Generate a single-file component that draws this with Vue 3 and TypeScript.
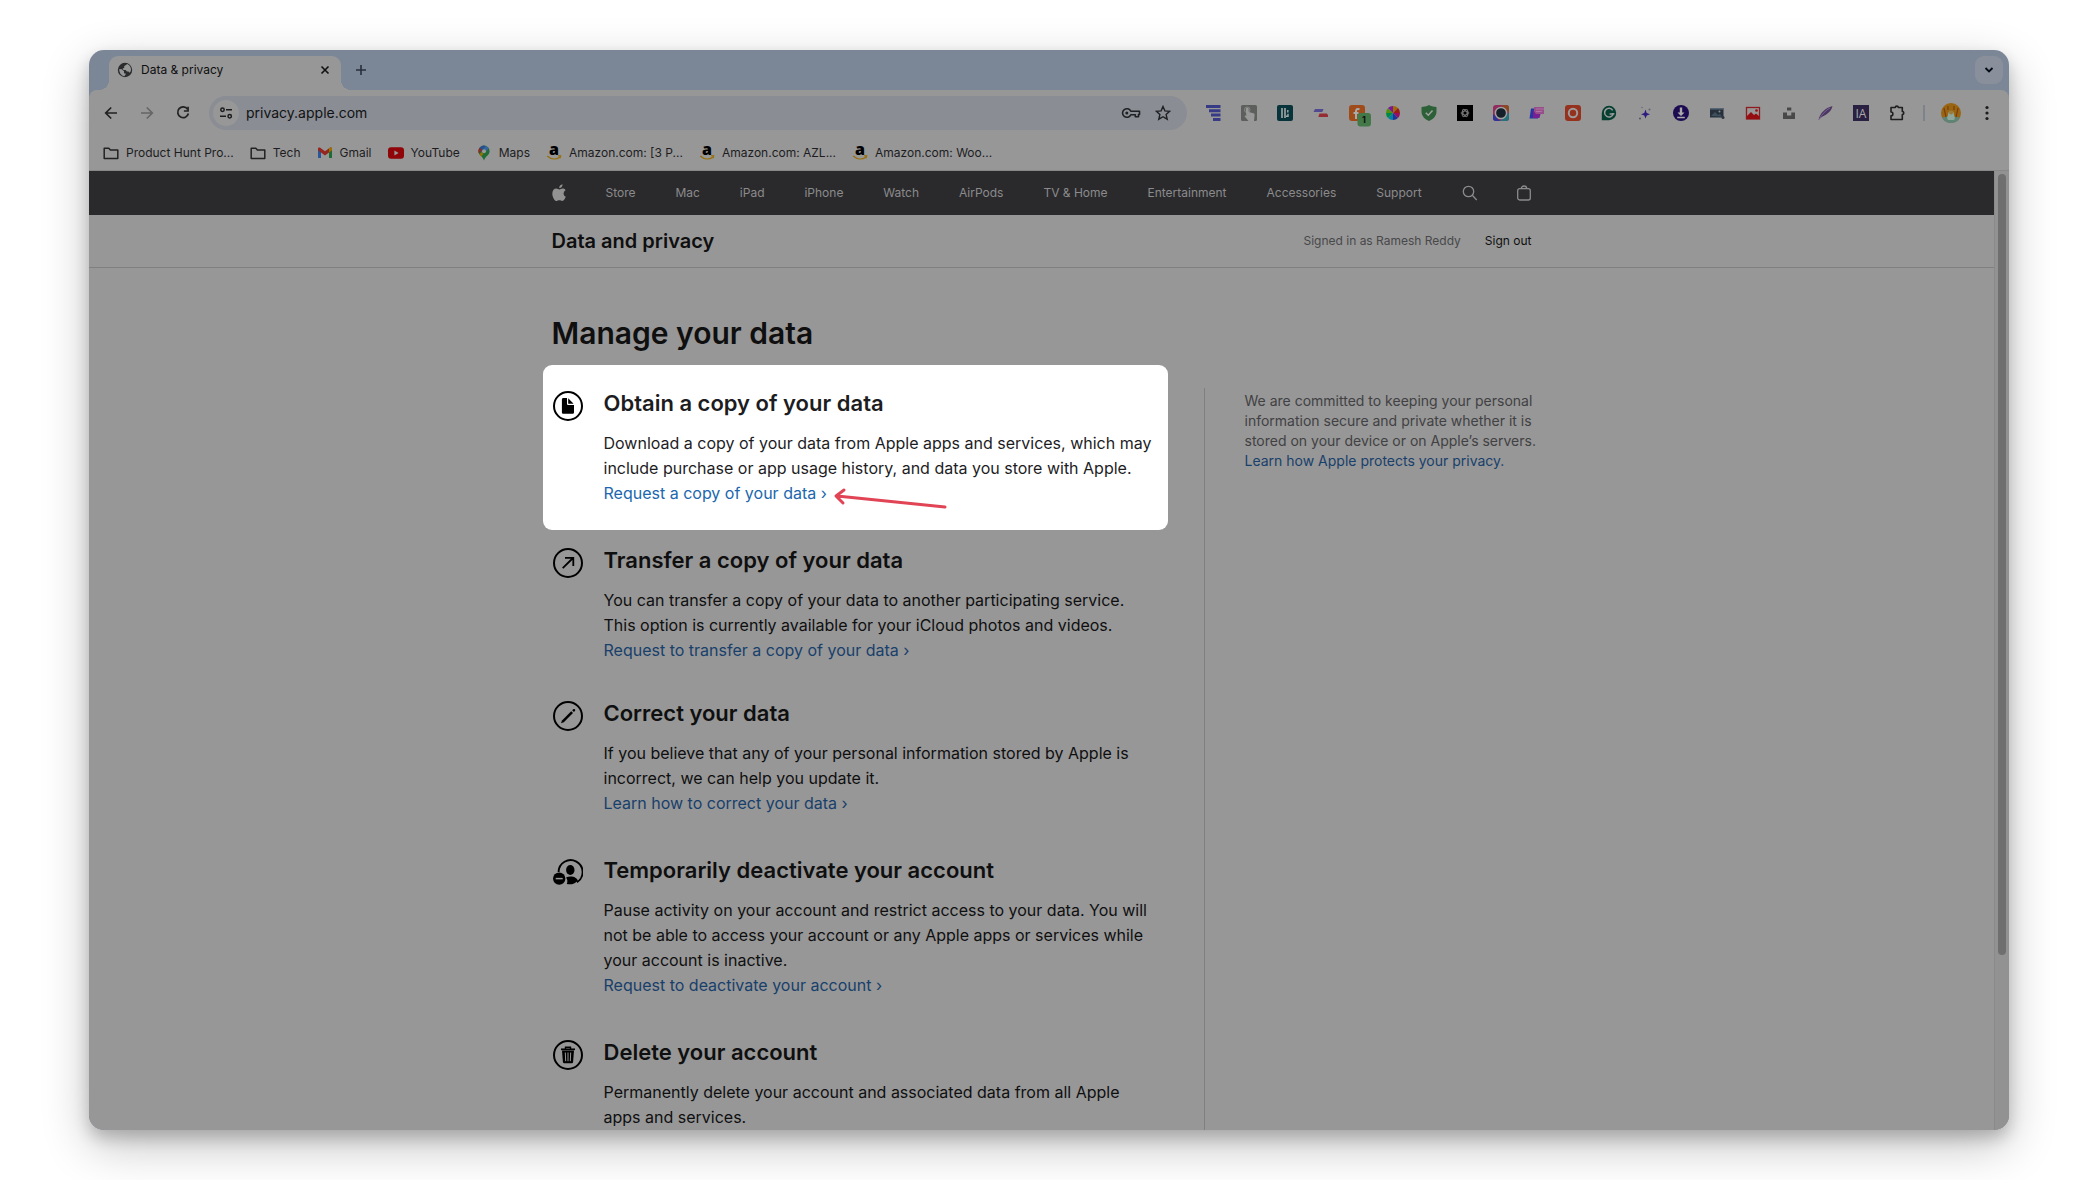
<script setup lang="ts">
interface Glyph {
  name: string
  art: string
}
interface Bookmark extends Glyph {
  label: string
}
interface Task {
  title: string
  lines: string[]
  link?: string
  icon: string
  kind?: string
}

const folder =
  '<path d="M1.2 3.2h4.600l1.600 1.800h7.400v8.600H1.200z" fill="none" stroke="#222" stroke-width="1.500" stroke-linejoin="round"/>'
const amazon =
  '<text x="8" y="10" text-anchor="middle" font-family="Open Sans, sans-serif" font-weight="800" font-size="16" fill="#000">a</text><path d="M1.200 11c4 3.600 9 3.700 12.600 1.200M12.200 10.800l2.400.1-.7 2.400" fill="none" stroke="#96700f" stroke-width="1.400"/>'

const bookmarks: Bookmark[] = [
  { name: 'folder', label: 'Product Hunt Pro...', art: folder },
  { name: 'folder', label: 'Tech', art: folder },
  {
    name: 'gmail',
    label: 'Gmail',
    art: '<path d="M1 3.500h3V13H1z" fill="#2a5596"/><path d="M12 3.500h3V13h-3z" fill="#1d6b35"/><path d="M1 4.500V3.600C1 2.500 2.300 2 3.200 2.700L8 6.300l4.800-3.600c.9-.7 2.200-.2 2.200.9v1.600L8 10.400 1 5.200z" fill="#95261f"/><path d="M12 3.300l.8-.6c.9-.7 2.200-.2 2.200.9v1.600l-3 2.200z" fill="#967200"/>',
  },
  {
    name: 'youtube',
    label: 'YouTube',
    art: '<rect x="0" y="2.200" width="16" height="11.600" rx="3" fill="#8f0509"/><path d="M6.400 5.600v4.800L10.600 8z" fill="#999"/>',
  },
  {
    name: 'maps',
    label: 'Maps',
    art: '<path d="M8 .6a5.600 5.600 0 0 0-5.600 5.600c0 4 4.300 4.700 5.600 9.200 1.300-4.500 5.600-5.200 5.600-9.200A5.600 5.600 0 0 0 8 .6z" fill="#1f6c35"/><path d="M3.600 2.700A5.600 5.600 0 0 1 9.800.9L5.200 7z" fill="#274f92"/><path d="M3.600 2.700A5.600 5.600 0 0 0 3 8.600L6 5z" fill="#8e2a20"/><path d="M3.500 9.500L5.500 7l2 1.700-2.300 2.900z" fill="#967200"/><path d="M9.800.9a5.600 5.600 0 0 1 3 2.400L10 6.500 7.500 4z" fill="#3566a0"/><circle cx="8" cy="6.200" r="2" fill="#999"/>',
  },
  { name: 'amazon', label: 'Amazon.com: [3 P...', art: amazon },
  { name: 'amazon', label: 'Amazon.com: AZL...', art: amazon },
  { name: 'amazon', label: 'Amazon.com: Woo...', art: amazon },
]

const extensions: Glyph[] = [
  {
    name: 'Funnel',
    art: '<path d="M1 0h14.500v3H1zM4 4.300h11.500v3H4zM6 8.600h9.500v3H6zM8 12.900h7.500V16H8z" fill="#373b86"/>',
  },
  {
    name: 'Touch',
    art: '<rect width="16" height="16" rx="1.500" fill="#5d5f5d"/><circle cx="6.200" cy="4.800" r="2.800" fill="none" stroke="#858585"/><path d="M6.200 2.800c1 0 1.500.6 1.500 1.500V7l4.700 1.200c1 .3 1.400 1 1.200 2L13 16H7.500L3.500 11.200c.5-.9 1.200-.8 1.800-.3L4.800 4.300c0-.9.4-1.500 1.400-1.500z" fill="#989898"/>',
  },
  {
    name: 'Notes',
    art: '<rect width="16" height="16" rx="2" fill="#06343a"/><path d="M5 3v10M8 3v10" stroke="#a3a8a8" stroke-width="1.600"/><path d="M10.800 5v2.500M11 8.700v2.600H9" fill="none" stroke="#a3a8a8" stroke-width="1.400"/>',
  },
  {
    name: 'Flow',
    art: '<path d="M2 4h8.500L9.300 7H.5z" fill="#524a91"/><path d="M6.500 8.500h7.300l1.200 1.500v2H5.300z" fill="#932c33"/>',
  },
  {
    name: 'Feed',
    art: '<rect width="16" height="16" rx="3" fill="#a04c1a"/><path d="M10.500 4.300c-2-.9-3.500 0-3.500 2V14M4.500 8h5" stroke="#aaa" stroke-width="2" fill="none"/><rect x="8.500" y="8" width="13.500" height="13.500" rx="3" fill="#437848"/><text x="15" y="18.200" text-anchor="middle" font-family="Inter, sans-serif" font-size="9" font-weight="700" fill="#111">1</text>',
  },
  {
    name: 'Colors',
    art: '<path d="M8 8V1a7 7 0 0 1 5 2z" fill="#a06b00"/><path d="M8 8l5-5a7 7 0 0 1 2 5z" fill="#9b1c10"/><path d="M8 8h7a7 7 0 0 1-2 5z" fill="#960e61"/><path d="M8 8l5 5a7 7 0 0 1-5 2z" fill="#25319a"/><path d="M8 8v7a7 7 0 0 1-5-2z" fill="#007f9e"/><path d="M8 8l-5 5a7 7 0 0 1-2-5z" fill="#008945"/><path d="M8 8H1a7 7 0 0 1 2-5z" fill="#50920b"/><path d="M8 8L3 3a7 7 0 0 1 5-2z" fill="#7d169a"/>',
  },
  {
    name: 'Shield',
    art: '<path d="M8 0c2.800 1.500 5 1.900 7.500 2v4.500c0 4.500-3.500 8-7.500 9.500C4 14.500.5 11 .5 6.500V2C3 1.900 5.200 1.500 8 0z" fill="#2c6037"/><path d="M4.800 7.700l2.500 2.500 4.200-4.700" stroke="#a0a0a0" stroke-width="1.500" fill="none"/>',
  },
  {
    name: 'Knot',
    art: '<rect width="16" height="16"/><g fill="none" stroke="#777" stroke-width=".9"><ellipse cx="8" cy="8" rx="4" ry="2"/><ellipse cx="8" cy="8" rx="4" ry="2" transform="rotate(60 8 8)"/><ellipse cx="8" cy="8" rx="4" ry="2" transform="rotate(120 8 8)"/></g>',
  },
  {
    name: 'Camera',
    art: '<rect width="16" height="16" rx="3" fill="#912c5d"/><path d="M16 7v6a3 3 0 0 1-3 3H7z" fill="#25727c"/><path d="M13 0a3 3 0 0 1 3 3v5L8 0z" fill="#8c4825"/><path d="M0 9l7 7H3a3 3 0 0 1-3-3z" fill="#2d3498"/><circle cx="8" cy="8" r="5.600" fill="#14212a" stroke="#9f9f9f" stroke-width="1.500"/>',
  },
  {
    name: 'Layers',
    art: '<path d="M2 3.500h7v10H.5z" fill="#2635a1"/><path d="M5 2h10v7H7l-2 3z" fill="#964f88"/><path d="M7 4h8M7 6.500h6" stroke="#b071a0"/><path d="M4 5v8h6.500l1-4H7z" fill="#771f92"/>',
  },
  {
    name: 'Ring',
    art: '<rect width="16" height="16" rx="3" fill="#96311d"/><circle cx="8" cy="8" r="4.200" fill="none" stroke="#9c9c9c" stroke-width="2"/>',
  },
  {
    name: 'Grammar',
    art: '<path d="M8 .8A7.200 7.200 0 1 1 8 15.200H.8V8A7.200 7.200 0 0 1 8 .8z" fill="#053f31"/><path d="M11.700 5.300A4.400 4.400 0 1 0 12.200 9H8.600M10.800 8.800h2.600" fill="none" stroke="#999" stroke-width="1.500"/>',
  },
  {
    name: 'Sparkle',
    art: '<path d="M8.500 4.500L9.700 8l3.300 1.200-3.300 1.200-1.200 3.100-1.200-3.100L4 9.200 7.300 8z" fill="#2f1a80"/><circle cx="12.500" cy="4.500" r="1" fill="#666070"/><circle cx="5" cy="2.500" r=".7" fill="#666070"/><circle cx="3" cy="13.500" r="1" fill="#555060"/>',
  },
  {
    name: 'Download',
    art: '<circle cx="8" cy="8" r="8" fill="#1c0b51"/><path d="M6.800 2.600h2.400v5H11.500L8 11 4.500 7.600h2.300z" fill="#aaa"/><path d="M4.200 12.500h7.600" stroke="#aaa" stroke-width="1.400"/>',
  },
  {
    name: 'Screen',
    art: '<rect x="1" y="3" width="13.500" height="9.500" fill="#25303c"/><path d="M1 3h13v1.500H1z" fill="#566573"/><path d="M2 11l4-4 3 3 2-1 2 2.500z" fill="#3f4f5e"/><circle cx="10.500" cy="6.500" r="1" fill="#8b8b8b"/><circle cx="14" cy="12.500" r="1.500" fill="#30383e"/>',
  },
  {
    name: 'Picture',
    art: '<rect x="1.500" y="2.500" width="13" height="11.500" fill="none" stroke="#8e1c1e" stroke-width="1.300"/><path d="M2 14V11l4-4 3 3 2-1.500 3.500 3V14z" fill="#950c11"/><circle cx="11.500" cy="5.500" r="1.300" fill="#950c11"/>',
  },
  {
    name: 'Unsplash',
    art: '<path d="M6 2.500h4.300v3H6zM2 7.500h4v3h4.300v-3H14v6.500H2z" fill="#484848"/>',
  },
  {
    name: 'Feather',
    art: '<path d="M1.500 15C3 8 8 3 15.500 1c-1 4-3 6-5 7.500-2 2-5 2.500-7 4.500z" fill="#4b3663"/><path d="M2 14.500C5 9 9 5 13 3" stroke="#776290" fill="none"/>',
  },
  {
    name: 'Archive',
    art: '<rect width="16" height="16" fill="#2a2142"/><text x="8" y="12.600" text-anchor="middle" font-family="Open Sans, sans-serif" font-size="12" fill="#aaa">IA</text>',
  },
  {
    name: 'Extensions',
    art: '<path d="M2 2.500h4.300C6.300.6 9.300.6 9.300 2.500h4v4c2 0 2 3 0 3v5H2v-3.700c2.500 0 2.500-3.800 0-3.800z" fill="none" stroke="#1f1f1f" stroke-width="1.600" stroke-linejoin="round"/>',
  },
]

const navLinks = [
  'Store', 'Mac', 'iPad', 'iPhone', 'Watch', 'AirPods',
  'TV & Home', 'Entertainment', 'Accessories', 'Support',
]

const ring = '<circle cx="15" cy="15" r="14" fill="none" stroke="#000" stroke-width="2"/>'

const tasks: Task[] = [
  {
    title: 'Obtain a copy of your data',
    lines: [
      'Download a copy of your data from Apple apps and services, which may',
      'include purchase or app usage history, and data you store with Apple.',
    ],
    link: 'Request a copy of your data ›',
    kind: 'spotlight',
    icon:
      ring +
      '<path d="M10.500 7H14v5.700c0 .8.500 1.300 1.300 1.300H21v7.200c0 1-.6 1.600-1.600 1.600h-8.900c-1 0-1.600-.6-1.600-1.600V8.600c0-1 .6-1.600 1.600-1.600z"/><path d="M15.200 7.300l5.400 5.500h-5.400z"/>',
  },
  {
    title: 'Transfer a copy of your data',
    lines: [
      'You can transfer a copy of your data to another participating service.',
      'This option is currently available for your iCloud photos and videos.',
    ],
    link: 'Request to transfer a copy of your data ›',
    kind: 'compact',
    icon:
      ring +
      '<path d="M9.700 20.200L20 10M12 9.800h8.300V18" fill="none" stroke="#000" stroke-width="1.800"/>',
  },
  {
    title: 'Correct your data',
    lines: [
      'If you believe that any of your personal information stored by Apple is',
      'incorrect, we can help you update it.',
    ],
    link: 'Learn how to correct your data ›',
    icon:
      ring +
      '<path d="M9 19.400l9.200-9.200 1.800 1.800-9.200 9.200-2.800 1z"/><path d="M19.200 9.300l1-1a1 1 0 0 1 1.700 1.700l-1 1z"/>',
  },
  {
    title: 'Temporarily deactivate your account',
    lines: [
      'Pause activity on your account and restrict access to your data. You will',
      'not be able to access your account or any Apple apps or services while',
      'your account is inactive.',
    ],
    link: 'Request to deactivate your account ›',
    icon:
      '<path d="M5.600 14A12 12 0 1 1 24 24.200" fill="none" stroke="#000" stroke-width="1.900"/><ellipse cx="17.300" cy="12" rx="4.200" ry="5"/><path d="M13 19.500c2.500-1.200 7-1.200 9.300.2 1.200.7 2.200 1.800 2.600 3A12 12 0 0 1 13.800 26c1-2.300.8-4.500-.8-6.500z"/><circle cx="6.200" cy="20.600" r="6.200"/><path d="M2.700 20.600h7" stroke="#979797" stroke-width="1.500"/>',
  },
  {
    title: 'Delete your account',
    lines: [
      'Permanently delete your account and associated data from all Apple',
      'apps and services.',
    ],
    icon:
      ring +
      '<path d="M8 9.300h14" stroke="#000" stroke-width="1.700"/><path d="M12.500 9V7.200h5V9" fill="none" stroke="#000" stroke-width="1.400"/><path d="M9 10.500h12l-.9 11.200c-.1 1-.7 1.600-1.700 1.600h-6.800c-1 0-1.600-.6-1.700-1.600z"/><path d="M12.300 12.500l.4 8.700M15 12.500v8.700M17.700 12.500l-.4 8.700" stroke="#979797" stroke-width="1" fill="none"/>',
  },
]
</script>

<template>
  <div class="stage">
    <div class="window">
      <header class="tabstrip">
        <div class="tab">
          <svg class="globe" viewBox="0 0 16 16" width="16" height="16">
            <circle cx="8" cy="8" r="7.200" fill="#2b2c2e" />
            <path d="M2.300 7l2.500.3L7 9.300v1.900l2 .6-1.500 2.500A6.300 6.300 0 0 1 2.300 7zM8.500 3.200L7 4.500l.3 1.300-1.800.9 1 1.300h2l1.500 1.500h1.500l.8 1.300 1.500-1.500a6 6 0 0 0-3.500-7.200z" fill="#979797" />
          </svg>
          <span class="tab-title">Data &amp; privacy</span>
          <button class="icon-btn close" aria-label="Close tab">
            <svg viewBox="0 0 10 10" width="10" height="10"><path d="M1.500 1.500l7 7M8.500 1.500l-7 7" stroke="#111" stroke-width="1.600" /></svg>
          </button>
        </div>
        <button class="icon-btn new-tab" aria-label="New tab">
          <svg viewBox="0 0 12 12" width="12" height="12"><path d="M6 1v10M1 6h10" stroke="#26303b" stroke-width="1.600" /></svg>
        </button>
        <button class="icon-btn tab-search" aria-label="Search tabs">
          <svg viewBox="0 0 10 10" width="10" height="10"><path d="M1.500 3L5 6.500 8.500 3" fill="none" stroke="#050a14" stroke-width="1.900" /></svg>
        </button>
      </header>

      <div class="toolbar">
        <button class="icon-btn cell" aria-label="Back">
          <svg viewBox="0 0 16 16" width="16" height="16"><path d="M14 8H3M8.200 2.500L2.700 8l5.500 5.500" fill="none" stroke="#222" stroke-width="1.700" /></svg>
        </button>
        <button class="icon-btn cell" aria-label="Forward">
          <svg viewBox="0 0 16 16" width="16" height="16"><path d="M2 8h11M7.800 2.500L13.300 8l-5.500 5.500" fill="none" stroke="#666" stroke-width="1.700" /></svg>
        </button>
        <button class="icon-btn cell" aria-label="Reload">
          <svg viewBox="0 0 16 16" width="16" height="16"><path d="M12.600 4.200A5.400 5.400 0 1 0 13.400 8.500" fill="none" stroke="#222" stroke-width="1.700" /><path d="M13.900 1.800v5H8.900V5.200h3.300V1.800z" fill="#222" /></svg>
        </button>
        <div class="omnibox">
          <button class="icon-btn site-info" aria-label="Site information">
            <svg viewBox="0 0 14 12" width="14" height="12"><g fill="none" stroke="#1c1c1e" stroke-width="1.500"><circle cx="3.500" cy="2.800" r="1.700" /><path d="M7 2.800h6M1 9.200h6" /><circle cx="10.700" cy="9.200" r="1.700" /></g></svg>
          </button>
          <input class="url" type="text" value="privacy.apple.com" aria-label="Address" spellcheck="false" />
          <button class="icon-btn omni-btn" aria-label="Passwords">
            <svg viewBox="0 0 20 12" width="20" height="12"><path d="M9.800 4.300h8.700v3.200h-1v2.300h-3.200V7.700H9.800A4.300 4.300 0 1 1 9.800 4.300z" fill="none" stroke="#202124" stroke-width="1.600" stroke-linejoin="round" /><circle cx="5.800" cy="6" r="1.500" fill="#202124" /></svg>
          </button>
          <button class="icon-btn omni-btn" aria-label="Bookmark this page">
            <svg viewBox="0 0 16 16" width="16" height="16"><path d="M8 1.500l1.900 4.400 4.800.4-3.600 3.200 1.100 4.700L8 11.700l-4.200 2.500 1.100-4.700L1.300 6.300l4.800-.4z" fill="none" stroke="#202124" stroke-width="1.400" /></svg>
          </button>
        </div>
        <button v-for="ext in extensions" :key="ext.name" class="icon-btn cell" :aria-label="ext.name">
          <svg class="glyph" viewBox="0 0 16 16" width="16" height="16" v-html="ext.art"></svg>
        </button>
        <span class="separator"></span>
        <button class="icon-btn cell" aria-label="Profile">
          <svg viewBox="0 0 20 20" width="20" height="20">
            <circle cx="10" cy="10" r="10" fill="#9a6510" />
            <path d="M1 14.500a10 10 0 0 0 18 0c-3-1.500-15-1.500-18 0z" fill="#5f8475" />
            <path d="M3 5l2 9M17 5l-2 9M7 3v4M13 3v4" stroke="#7a3d0c" stroke-width="1.200" />
            <path d="M10 8c2 0 3 1.500 3 4 1 2 1 4 0 5H7c-1-1-1-3 0-5 0-2.500 1-4 3-4z" fill="#8fa69b" />
            <circle cx="10" cy="9.500" r="2" fill="#9b7a3c" />
          </svg>
        </button>
        <button class="icon-btn cell" aria-label="Menu">
          <svg viewBox="0 0 4 16" width="4" height="16" fill="#1c1c1c"><circle cx="2" cy="2.500" r="1.600" /><circle cx="2" cy="8" r="1.600" /><circle cx="2" cy="13.500" r="1.600" /></svg>
        </button>
      </div>

      <nav class="bookmarks" aria-label="Bookmarks">
        <a v-for="(b, i) in bookmarks" :key="i" href="#" class="bookmark">
          <svg class="glyph" viewBox="0 0 16 16" width="16" height="16" v-html="b.art"></svg>
          <span>{{ b.label }}</span>
        </a>
      </nav>

      <div class="viewport">
        <div class="page">
          <nav class="global-nav" aria-label="Global">
            <div class="container nav-row">
              <a href="#" aria-label="Apple">
                <svg viewBox="0 0 14 18" width="14" height="18" fill="#929293"><path d="M11.600 9.600c0-1.700 1-2.800 2-3.400C12.700 5 11.500 4.600 10.500 4.600c-1.300 0-2.200.8-3.100.8-.9 0-1.900-.8-3.200-.8C2.200 4.700.3 6.300.3 9.700c0 3.400 2.400 7.300 4.300 7.300.9 0 1.600-.7 2.800-.7 1.200 0 1.700.7 2.800.7 1.600 0 3-2.600 3.600-4.200-1.400-.6-2.200-1.700-2.200-3.200zM9.700 3.100C10.300 2.300 10.600 1.300 10.500.3 8.600.5 7.100 2.300 7.200 4.100c1 .1 1.900-.3 2.500-1z" /></svg>
              </a>
              <a v-for="l in navLinks" :key="l" href="#">{{ l }}</a>
              <a href="#" aria-label="Search">
                <svg viewBox="0 0 16 16" width="16" height="16" fill="none" stroke="#8b8b8c" stroke-width="1.300"><circle cx="6.500" cy="6.500" r="5.200" /><path d="M10.300 10.300l4.400 4.700" /></svg>
              </a>
              <a href="#" aria-label="Bag">
                <svg viewBox="0 0 14 16" width="14" height="16" fill="none" stroke="#8b8b8c" stroke-width="1.300"><rect x=".7" y="3.700" width="12.600" height="11.300" rx="2" /><path d="M4.300 3.700c0-3.600 5.400-3.600 5.400 0" /></svg>
              </a>
            </div>
          </nav>

          <div class="local-nav">
            <div class="container local-row">
              <span class="local-title">Data and privacy</span>
              <span class="signed">Signed in as Ramesh Reddy</span>
              <a href="#" class="sign-out">Sign out</a>
            </div>
          </div>

          <main class="container content">
            <h1>Manage your data</h1>
            <div class="columns">
              <div class="tasks">
                <section v-for="t in tasks" :key="t.title" class="task" :class="t.kind">
                  <svg class="task-icon" viewBox="0 0 30 30" width="30" height="30" v-html="t.icon"></svg>
                  <div class="task-body">
                    <h2>{{ t.title }}</h2>
                    <p>
                      <span v-for="line in t.lines" :key="line" class="line">{{ line }}</span>
                      <a v-if="t.link" href="#">{{ t.link }}</a>
                    </p>
                  </div>
                  <svg v-if="t.kind === 'spotlight'" class="arrow" viewBox="0 0 120 30" width="120" height="30">
                    <path d="M114 22L6 11M13 5L5 11l7 7" fill="none" stroke="#e04455" stroke-width="3" stroke-linecap="round" stroke-linejoin="round" />
                  </svg>
                </section>
              </div>
              <aside class="aside">
                <p>
                  <span class="line">We are committed to keeping your personal</span>
                  <span class="line">information secure and private whether it is</span>
                  <span class="line">stored on your device or on Apple’s servers.</span>
                  <a href="#">Learn how Apple protects your privacy.</a>
                </p>
              </aside>
            </div>
          </main>
        </div>
        <div class="scrollbar"><div class="thumb"></div></div>
      </div>
    </div>
  </div>
</template>

<style>
body {
  margin: 0;
  background: #fff;
}
</style>

<style scoped>
* {
  box-sizing: border-box;
}
.stage {
  height: 100vh;
  padding: 50px 88px 50px 89px;
  font-family: Inter, "Liberation Sans", sans-serif;
  line-height: 16px;
  color: #0f0f10;
}
.window {
  height: 100%;
  display: flex;
  flex-direction: column;
  overflow: hidden;
  border-radius: 15px;
  background: #7b8797;
  box-shadow: 0 8px 16px rgba(0, 0, 0, 0.2), 0 16px 48px rgba(0, 0, 0, 0.24);
}
a {
  color: inherit;
  text-decoration: none;
}
svg {
  display: block;
}
.icon-btn {
  display: flex;
  align-items: center;
  justify-content: center;
  flex: none;
  padding: 0;
  border: 0;
  background: none;
}

/* tab strip */
.tabstrip {
  display: flex;
  align-items: center;
  flex: none;
  height: 40px;
  padding: 0 6px 0 20px;
}
.tab {
  position: relative;
  align-self: flex-end;
  display: flex;
  align-items: center;
  width: 232px;
  height: 34px;
  padding: 0 8px 6px;
  border-radius: 9px 9px 0 0;
  background: #979797;
}
.tab::before,
.tab::after {
  content: "";
  position: absolute;
  bottom: 0;
  width: 10px;
  height: 10px;
}
.tab::before {
  left: -10px;
  background: radial-gradient(circle at 0 0, transparent 10px, #979797 10px);
}
.tab::after {
  right: -10px;
  background: radial-gradient(circle at 100% 0, transparent 10px, #979797 10px);
}
.globe {
  margin-right: 8px;
}
.tab-title {
  flex: 1;
  font-size: 12px;
}
.close {
  width: 16px;
  height: 16px;
}
.new-tab {
  width: 28px;
  height: 28px;
  margin-left: 6px;
}
.tab-search {
  width: 28px;
  height: 28px;
  margin-left: auto;
  border-radius: 9px;
  background: #8a909b;
}

/* toolbar */
.toolbar {
  display: flex;
  align-items: center;
  flex: none;
  height: 46px;
  padding: 0 4px;
  border-radius: 8px 8px 0 0;
  background: #979797;
}
.cell {
  width: 36px;
  height: 34px;
}
.glyph {
  overflow: visible;
}
.omnibox {
  flex: 1;
  display: flex;
  align-items: center;
  min-width: 0;
  height: 34px;
  margin: 0 8px;
  padding: 0 8px 0 4px;
  border-radius: 17px;
  background: #8a8d93;
}
.site-info {
  width: 26px;
  height: 26px;
  border-radius: 13px;
  background: #979797;
}
.url {
  flex: 1;
  min-width: 0;
  height: 26px;
  padding: 0 7px 2px;
  border: 0;
  outline: 0;
  background: none;
  color: #111213;
  font-family: inherit;
  font-size: 14px;
}
.omni-btn {
  width: 32px;
  height: 32px;
}
.separator {
  flex: none;
  width: 2px;
  height: 16px;
  margin: 0 8px;
  background: #7d828b;
}

/* bookmarks */
.bookmarks {
  display: flex;
  align-items: center;
  flex: none;
  gap: 16px;
  height: 35px;
  padding: 0 14px;
  border-bottom: 1px solid #888;
  background: #979797;
  color: #1d1d1f;
  font-size: 12px;
}
.bookmark {
  display: flex;
  align-items: center;
  gap: 7px;
  white-space: nowrap;
}

/* page */
.viewport {
  flex: 1;
  display: flex;
  min-height: 0;
  background: #979797;
}
.page {
  flex: 1;
  min-width: 0;
  overflow: hidden;
}
.scrollbar {
  flex: none;
  width: 15px;
  padding: 3px;
  border-left: 1px solid #8a8a8a;
  background: #929292;
}
.thumb {
  width: 8px;
  height: 82%;
  border-radius: 4px;
  background: #6f6f6f;
}
.container {
  width: 980px;
  max-width: 100%;
  margin: 0 auto;
}
.global-nav {
  background: #2a2a2c;
  color: #8b8b8c;
  font-size: 12px;
}
.nav-row {
  display: flex;
  align-items: center;
  justify-content: space-between;
  height: 44px;
  padding-bottom: 1px;
}
.local-nav {
  border-bottom: 1px solid #808082;
}
.local-row {
  display: flex;
  align-items: center;
  height: 52px;
  font-size: 12px;
}
.local-title {
  flex: 1;
  font-size: 20px;
  font-weight: 600;
}
.signed {
  margin-right: 24px;
  color: #48484a;
}
.content {
  padding-top: 40px;
}
h1 {
  margin: 0;
  font-size: 30px;
  line-height: 50px;
  font-weight: 600;
}
.columns {
  display: flex;
  margin-top: 7px;
}
.tasks {
  flex: none;
  width: 625px;
  margin-left: -9px;
}
.task {
  position: relative;
  display: flex;
  gap: 21px;
  margin-bottom: 40px;
  padding-left: 10px;
}
.task-body {
  min-width: 0;
}
.compact {
  margin-bottom: 36px;
}
.spotlight {
  height: 165px;
  margin-bottom: 16px;
  padding-top: 24px;
  border-radius: 9px;
  background: #fff;
  color: #1d1d1f;
}
.task-icon {
  flex: none;
  margin-top: 2px;
}
h2 {
  margin: 0 0 13px;
  font-size: 22px;
  line-height: 29px;
  font-weight: 600;
  white-space: nowrap;
}
.task p {
  margin: 0;
  font-size: 16px;
  line-height: 25px;
  white-space: nowrap;
}
.line {
  display: block;
}
p a {
  color: #18406b;
}
.spotlight a {
  color: #2067ad;
}
.arrow {
  position: absolute;
  left: 288px;
  top: 120px;
}
.aside {
  flex: 1;
  margin: 23px 0 0 36px;
  padding: 3px 0 0 40px;
  border-left: 1px solid #7f7f81;
  color: #414143;
  font-size: 14px;
  line-height: 20px;
  white-space: nowrap;
}
.aside p {
  margin: 0;
}
</style>
